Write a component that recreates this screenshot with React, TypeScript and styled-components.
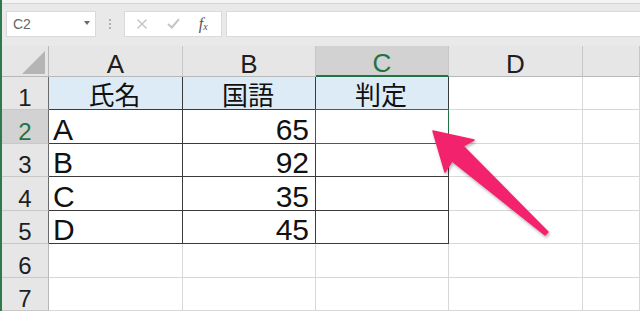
import React from "react"
import styled, { createGlobalStyle, css } from "styled-components"

const GlobalStyle = createGlobalStyle`
 html, body {
    margin: 0;
    padding: 0;
    background: #ffffff;
    overflow: hidden;
 }
 * {
    box-sizing: border-box;
 }
`

const EXCEL_GREEN = "#217346"
const TABLE_LINE = "#3a3a3a"
const GRID_LINE = "#d8d8d8"

const columns = ["A", "B", "C", "D", ""]
const selectedCol = 2
const selectedRow = 2

type Row = { name: string; score: string } | null

const rows: Row[] = [
    { name: "A", score: "65" },
    { name: "B", score: "92" },
    { name: "C", score: "35" },
    { name: "D", score: "45" },
    null,
    null,
]

const App: React.FC = () => {
    return (
        <>
            <GlobalStyle />
            <Window>
                <TopStrip />
                <FormulaBar>
                    <NameBox>
                        C2
                        <DropArrow />
                    </NameBox>
                    <Grip>
                        <span />
                        <span />
                        <span />
                    </Grip>
                    <ButtonsBox>
                        <svg width="12" height="12" viewBox="0 0 12 12">
                            <path d="M1.5 1.5 L10.5 10.5 M10.5 1.5 L1.5 10.5" stroke="#c4c4c4" strokeWidth="1.4" fill="none" />
                        </svg>
                        <svg width="13" height="11" viewBox="0 0 13 11">
                            <path d="M1 6 L4.8 9.5 L12 1.2" stroke="#c4c4c4" strokeWidth="2" fill="none" />
                        </svg>
                        <FxText>
                            f<sub>x</sub>
                        </FxText>
                    </ButtonsBox>
                    <FormulaInput />
                </FormulaBar>
                <Sheet>
                    <Corner>
                        <CornerTriangle />
                    </Corner>
                    {columns.map((col, i) => (
                        <ColHeader key={"h" + i} $selected={i === selectedCol}>
                            {col}
                        </ColHeader>
                    ))}

                    <RowHeader $table>1</RowHeader>
                    <Cell $table $fill $cjk $align="center">氏名</Cell>
                    <Cell $table $fill $cjk $align="center">国語</Cell>
                    <Cell $table $fill $cjk $align="center">判定</Cell>
                    <Cell />
                    <Cell />

                    {rows.map((row, i) => {
                        const n = i + 2
                        return (
                            <React.Fragment key={"r" + n}>
                                <RowHeader $table={!!row} $selected={n === selectedRow}>
                                    {n}
                                </RowHeader>
                                <Cell $table={!!row}>{row?.name}</Cell>
                                <Cell $table={!!row} $align="right">{row?.score}</Cell>
                                <Cell $table={!!row} $active={n === selectedRow} />
                                <Cell />
                                <Cell />
                            </React.Fragment>
                        )
                    })}

                    <ArrowLayer width="638" height="264" viewBox="0 0 638 264">
                        <defs>
                            <filter id="arrowShadow" x="-20%" y="-20%" width="140%" height="140%">
                                <feDropShadow dx="1" dy="2" stdDeviation="1.5" floodColor="#000" floodOpacity="0.3" />
                            </filter>
                        </defs>
                        <polygon
                            points="431,85 472,94 461,100 546,186 543,189 450,115 443,126"
                            fill="#f2246c"
                            stroke="#f2246c"
                            strokeWidth="1.5"
                            strokeLinejoin="round"
                            filter="url(#arrowShadow)"
                        />
                    </ArrowLayer>
                </Sheet>
            </Window>
        </>
    )
}

export default App

const Window = styled.div`
 display: flex;
 flex-direction: column;
 width: 640px;
 height: 311px;
 border-left: 2px solid #2e7a4c;
 background: #e9e9e9;
 overflow: hidden;
`

const TopStrip = styled.div`
 height: 4px;
 background: #f4f4f4;
 border-bottom: 1px solid #d6d6d6;
`

const FormulaBar = styled.div`
 display: flex;
 align-items: center;
 height: 43px;
 padding: 7px 0 9px 4px;
`

const NameBox = styled.div`
 display: flex;
 align-items: center;
 justify-content: space-between;
 width: 90px;
 height: 26px;
 padding: 1px 5px 0 6px;
 background: #ffffff;
 border: 1px solid #dadada;
 font-family: "Liberation Sans", Arial, sans-serif;
 font-size: 14px;
 color: #666666;
`

const DropArrow = styled.span`
 width: 0;
 height: 0;
 border-left: 3.5px solid transparent;
 border-right: 3.5px solid transparent;
 border-top: 4px solid #6a6a6a;
 margin-top: -2px;
`

const Grip = styled.div`
 display: flex;
 flex-direction: column;
 align-items: center;
 justify-content: center;
 gap: 2px;
 width: 28px;
 height: 26px;
 span {
    width: 2px;
    height: 2px;
    background: #b0b0b0;
 }
`

const ButtonsBox = styled.div`
 display: flex;
 align-items: center;
 justify-content: space-around;
 width: 98px;
 height: 26px;
 padding: 0 4px 0 2px;
 background: #ffffff;
 border: 1px solid #dadada;
`

const FxText = styled.span`
 font-family: "Liberation Serif", "Times New Roman", serif;
 font-style: italic;
 font-size: 16px;
 color: #555555;
 sub {
    font-size: 10px;
    vertical-align: -1px;
 }
`

const FormulaInput = styled.div`
 flex: 1;
 height: 26px;
 margin-left: 4px;
 background: #ffffff;
 border: 1px solid #dadada;
 border-right: none;
`

const Sheet = styled.div`
 position: relative;
 display: grid;
 grid-template-columns: 47px 134px 133px 133px 134px 1fr;
 grid-template-rows: 31px 33px 34px 33px 34px 33px 34px 33px;
 background: #ffffff;
`

const headerBase = css`
 display: flex;
 justify-content: center;
 background: #e6e6e6;
 font-family: "Liberation Sans", Arial, sans-serif;
 color: #1e1e1e;
`

const Corner = styled.div`
 ${headerBase};
 justify-content: flex-end;
 align-items: flex-end;
 padding: 0 3px 2px 0;
 border-right: 1px solid #b8b8b8;
 border-bottom: 1px solid #b8b8b8;
`

const CornerTriangle = styled.span`
 width: 23px;
 height: 23px;
 background: #b5b5b5;
 clip-path: polygon(100% 0, 100% 100%, 0 100%);
`

const ColHeader = styled.div<{ $selected?: boolean }>`
 ${headerBase};
 align-items: center;
 padding-top: 5px;
 font-size: 26px;
 line-height: 24px;
 border-right: 1px solid #c6c6c6;
 border-bottom: 1px solid #b8b8b8;
 ${(p) =>
    p.$selected &&
    css`
       background: #d2d2d2;
       color: ${EXCEL_GREEN};
       border-bottom: 2px solid ${EXCEL_GREEN};
    `}
`

const RowHeader = styled.div<{ $selected?: boolean; $table?: boolean }>`
 ${headerBase};
 align-items: flex-end;
 font-size: 24px;
 line-height: 22px;
 border-right: 1px solid ${(p) => (p.$table ? "#6a6a6a" : "#b8b8b8")};
 border-bottom: 1px solid #c8c8c8;
 ${(p) =>
    p.$selected &&
    css`
       background: #d2d2d2;
       color: ${EXCEL_GREEN};
    `}
`

const Cell = styled.div<{
    $table?: boolean
    $fill?: boolean
    $cjk?: boolean
    $active?: boolean
    $align?: "left" | "center" | "right"
}>`
 position: relative;
 display: flex;
 align-items: flex-end;
 justify-content: ${(p) =>
    p.$align === "center" ? "center" : p.$align === "right" ? "flex-end" : "flex-start"};
 padding: 0 6px 0 4px;
 font-family: "Liberation Sans", Arial, sans-serif;
 font-size: 30px;
 line-height: 26px;
 color: #111111;
 white-space: nowrap;
 border-right: 1px solid ${(p) => (p.$table ? TABLE_LINE : GRID_LINE)};
 border-bottom: 1px solid ${(p) => (p.$table ? TABLE_LINE : GRID_LINE)};
 background: ${(p) => (p.$fill ? "#ddebf7" : "#ffffff")};
 ${(p) =>
    p.$cjk &&
    css`
       font-family: "Noto Sans CJK JP", sans-serif;
       font-size: 26px;
       line-height: 30px;
    `}
 ${(p) =>
    p.$active &&
    css`
       &::after {
          content: "";
          position: absolute;
          top: -1px;
          left: -1px;
          right: -1px;
          bottom: -1px;
          border: 1.5px solid ${EXCEL_GREEN};
       }
    `}
`

const ArrowLayer = styled.svg`
 position: absolute;
 top: 0;
 left: 0;
 pointer-events: none;
 overflow: visible;
`
